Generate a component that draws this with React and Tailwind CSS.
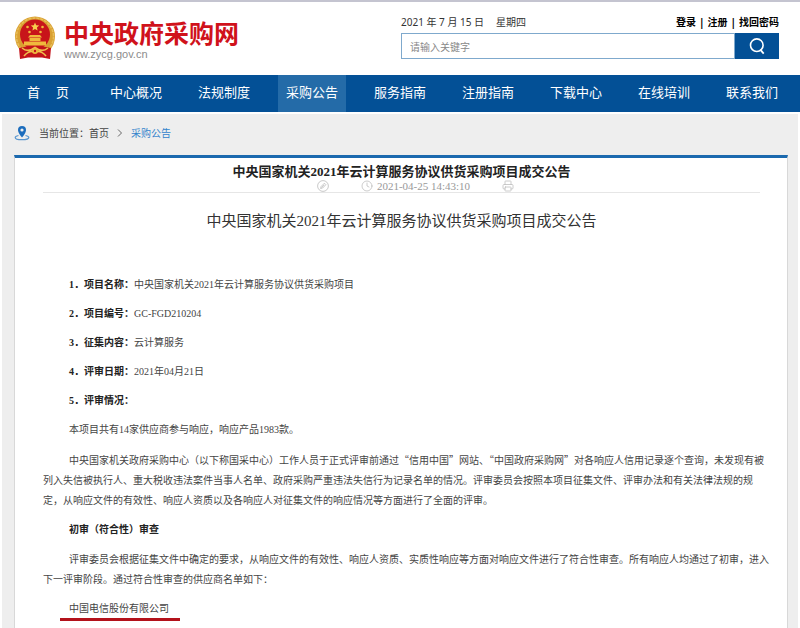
import { Clock, Printer } from "lucide-react";

const navItems = [
  "首\u2003 页",
  "中心概况",
  "法规制度",
  "采购公告",
  "服务指南",
  "注册指南",
  "下载中心",
  "在线培训",
  "联系我们",
];

const facts = [
  { label: "1．项目名称：", value: "中央国家机关2021年云计算服务协议供货采购项目" },
  { label: "2．项目编号：", value: "GC-FGD210204" },
  { label: "3．征集内容：", value: "云计算服务" },
  { label: "4．评审日期：", value: "2021年04月21日" },
  { label: "5．评审情况：", value: "" },
];

const title = "中央国家机关2021年云计算服务协议供货采购项目成交公告";

function Emblem() {
  return (
    <svg viewBox="0 0 42 44" className="h-11 w-[42px] shrink-0" aria-hidden="true">
      <circle cx="21" cy="20.5" r="20" fill="#d9a032" />
      <circle cx="21" cy="20.5" r="18.5" fill="none" stroke="#e8be58" strokeWidth="1.5" strokeDasharray="3 1" />
      <circle cx="21" cy="18.5" r="15" fill="#c8141a" />
      <path d="M21 6.5l1.2 2.8 3 .2-2.3 2 .7 3-2.6-1.6-2.6 1.6.7-3-2.3-2 3-.2z" fill="#f7cf4d" />
      <g fill="#f0b93c">
        <circle cx="13.5" cy="11" r="1.3" />
        <circle cx="28.5" cy="11" r="1.3" />
        <circle cx="15.5" cy="16" r="1.3" />
        <circle cx="26.5" cy="16" r="1.3" />
        <path d="M16 19h10l2 2.500H14zM15.500 22h11v3h-11zM10 25.500h22v4H10z" />
      </g>
      <path d="M5 32l8-1.500h16l8 1.500-1 11-8-1.500h-14L6 43z" fill="#c4131a" />
      <path d="M8 32q6 5 13-.5 7 5.500 13 .5M10 40q5-6 11-4 6-2 11 4" fill="none" stroke="#f0c04c" strokeWidth="1.600" />
      <circle cx="21" cy="35" r="3" fill="#efb840" />
      <circle cx="21" cy="35" r="1.200" fill="#c4131a" />
    </svg>
  );
}

function PinIcon() {
  return (
    <svg viewBox="0 0 16 16" className="h-4 w-4" aria-hidden="true">
      <path d="M8 1a4 4 0 0 0-4 4c0 3 4 7.500 4 7.500S12 8 12 5a4 4 0 0 0-4-4z" fill="#1c6dbd" />
      <circle cx="8" cy="5" r="1.600" fill="#eee" />
      <path d="M4.500 10.500C2.500 11 1.200 11.600 1.200 12.400c0 1.400 3 2.300 6.800 2.300s6.800-.9 6.800-2.300c0-.8-1.300-1.400-3.300-1.900" fill="none" stroke="#5b97cf" strokeWidth="1.200" />
    </svg>
  );
}

function SearchIcon() {
  return (
    <svg viewBox="0 0 18 18" className="h-[18px] w-[18px]" fill="none" stroke="currentColor" strokeWidth="1.600" aria-hidden="true">
      <circle cx="8.800" cy="8.200" r="6.300" />
      <path d="M12.300 12.600l3.400 4" strokeWidth="1.800" />
    </svg>
  );
}

function EditIcon() {
  return (
    <svg viewBox="0 0 12 12" className="h-3 w-3" fill="none" stroke="currentColor" strokeWidth="0.8" aria-hidden="true">
      <circle cx="6" cy="6" r="5.400" />
      <path d="M3.600 8.500l.5-2 3.300-3.300 1.500 1.500-3.300 3.300zM4.600 7.500l2.700-2.700" />
    </svg>
  );
}

function Header() {
  return (
    <header className="flex items-start justify-between border-t-2 border-[#c4c4d0] pr-[21px] pl-[14px]">
      <a href="#" className="flex gap-2 pt-[14px]">
        <Emblem />
        <span className="flex flex-col">
          <span className="text-[25px] leading-8 font-bold text-[#d0121b]">中央政府采购网</span>
          <span className="font-['Liberation_Sans',sans-serif] text-[11px] leading-3 text-[#8c8c8c]">www.zycg.gov.cn</span>
        </span>
      </a>
      <div className="w-[378px] pt-3">
        <div className="flex justify-between font-['Noto_Sans','Noto_Sans_CJK_SC',sans-serif] text-[10px] leading-4">
          <p className="flex gap-3 text-[#333]">
            <span>2021 年 7 月 15 日</span>
            <span>星期四</span>
          </p>
          <p className="flex gap-[3px] font-bold text-black">
            <a href="#">登录</a>
            <span>|</span>
            <a href="#">注册</a>
            <span>|</span>
            <a href="#">找回密码</a>
          </p>
        </div>
        <form className="mt-[3px] flex h-[26px]">
          <input
            type="text"
            aria-label="关键字"
            placeholder="请输入关键字"
            className="min-w-0 flex-1 border border-[#7fa9cd] bg-white px-2 text-[10px] placeholder:text-[#888]"
          />
          <button type="button" aria-label="搜索" className="flex w-11 items-center justify-center bg-[#035096] text-white">
            <SearchIcon />
          </button>
        </form>
      </div>
    </header>
  );
}

function Nav() {
  return (
    <nav className="mt-[15px] grid h-[37px] grid-cols-9 bg-[#035096] px-1 text-[13px] text-white">
      {navItems.map((item) => (
        <a
          key={item}
          href="#"
          className={
            item === "采购公告"
              ? "mx-[10px] flex justify-center bg-[#246ba8] leading-[34px] whitespace-nowrap"
              : "mx-[10px] flex justify-center leading-[34px] whitespace-nowrap"
          }
        >
          {item}
        </a>
      ))}
    </nav>
  );
}

function Article() {
  return (
    <article className="flex-1 border-x border-t-[3px] border-x-[#d8d8d8] border-t-[#1b69ae] bg-white pr-[17px] pb-1 pl-7 font-['Liberation_Serif','Noto_Sans_CJK_SC',serif]">
      <div className="mr-[10px] border-b border-[#e6e6e6] pt-[6px]">
        <h1 className="text-center text-[13px] leading-4 font-bold text-[#222]">{title}</h1>
        <div className="flex h-3 items-center justify-center gap-8 pl-7 text-[#bbb]">
          <EditIcon />
          <span className="flex items-center gap-1">
            <Clock size={12} strokeWidth={1.5} />
            <time className="text-[11px] leading-3 text-[#999]">2021-04-25 14:43:10</time>
          </span>
          <Printer size={12} strokeWidth={1.5} />
        </div>
      </div>
      <h2 className="mt-4 mr-[10px] text-center text-[15px] leading-6 text-[#333]">{title}</h2>

      <div className="mt-[42px] flex flex-col gap-[10px] text-[10px] leading-5 text-[#444]">
        <div className="flex flex-col gap-[9px]">
          {facts.map((fact) => (
            <p key={fact.label} className="indent-[26px]">
              <strong className="text-[#222]">{fact.label}</strong>
              {fact.value}
            </p>
          ))}
          <p className="indent-[26px]">本项目共有14家供应商参与响应，响应产品1983款。</p>
        </div>
        <p className="indent-[26px] font-['Noto_Sans_CJK_SC',sans-serif]">
          中央国家机关政府采购中心（以下称国采中心）工作人员于正式评审前通过“信用中国”网站、“中国政府采购网”对各响应人信用记录逐个查询，未发现有被列入失信被执行人、重大税收违法案件当事人名单、政府采购严重违法失信行为记录名单的情况。评审委员会按照本项目征集文件、评审办法和有关法律法规的规定，从响应文件的有效性、响应人资质以及各响应人对征集文件的响应情况等方面进行了全面的评审。
        </p>
        <h3 className="indent-[26px] font-bold text-[#222]">初审（符合性）审查</h3>
        <p className="indent-[26px]">
          评审委员会根据征集文件中确定的要求，从响应文件的有效性、响应人资质、实质性响应等方面对响应文件进行了符合性审查。所有响应人均通过了初审，进入下一评审阶段。通过符合性审查的供应商名单如下：
        </p>
        <p className="ml-[17px] self-start border-b-[3px] border-[#b3121b] pr-[11px] pl-[9px] leading-[18px]">中国电信股份有限公司</p>
      </div>
    </article>
  );
}

export default function App() {
  return (
    <div lang="zh-CN" className="flex min-h-screen flex-col bg-white font-['Noto_Sans_CJK_SC',sans-serif]">
      <Header />
      <Nav />
      <main className="mx-[2px] mt-[2px] flex flex-1 flex-col bg-[#eeeeee] pr-[10px] pl-3">
        <div className="flex h-[41px] items-center pb-1 text-[10px] text-[#444]">
          <PinIcon />
          <span className="ml-[9px]">当前位置：</span>
          <a href="#">首页</a>
          <svg viewBox="0 0 6 8" className="mx-2 h-2 w-[6px]" fill="none" stroke="#666" aria-hidden="true">
            <path d="M1 .5L4.500 4 1 7.500" />
          </svg>
          <a href="#" className="text-[#3584cc]">采购公告</a>
        </div>
        <Article />
      </main>
    </div>
  );
}
